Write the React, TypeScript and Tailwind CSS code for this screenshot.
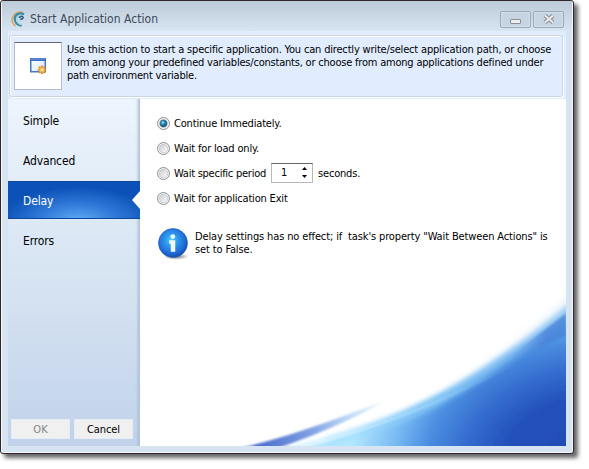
import { useState } from "react";

const TABS = ["Simple", "Advanced", "Delay", "Errors"];

function Logo() {
  return (
    <svg className="h-4 w-[15px] shrink-0" viewBox="0 0 15 16" fill="none">
      <path d="M12 1.200C7 .3 2.800 2.400 1.400 6.400c-.8 3.500.4 6.800 3.200 8.600" stroke="#e3a266" strokeWidth="1.600" />
      <path d="M13 3.400C9 1.400 4.600 2.800 3.700 7.400c-.2 4 2.800 6.900 7 7.200" stroke="#3a8da6" strokeWidth="2.400" />
      <path d="M12 4.800C8.500 3.600 6 5.500 6 8.200c0 2.800 2 4.600 4.600 5.400" stroke="#a9d8e2" strokeWidth="1.600" />
      <path d="M8 6.800c2-2.200 4.500-1.400 4 .2-.4 1-1.600 1.300-2.700 1.300" stroke="#2f6484" strokeWidth="1.700" />
    </svg>
  );
}

function WindowIcon() {
  return (
    <svg className="h-4 w-[17px]" viewBox="0 0 17 16">
      <defs>
        <linearGradient id="win" x2="1" y2="1">
          <stop stopColor="#fff" />
          <stop offset="1" stopColor="#d5e4f8" />
        </linearGradient>
      </defs>
      <rect x=".75" y=".75" width="14.500" height="13" fill="url(#win)" stroke="#4778c8" strokeWidth="1.500" />
      <path d="M0 1.500h16" stroke="#3c6dc4" strokeWidth="3" />
      <path d="M1 1h14" stroke="#6f9be2" />
      <path d="M12 7.500v8.500M7.800 11.700h8.400M9 8.700l6 6M15 8.700l-6 6" stroke="#d98d35" strokeWidth="2" />
      <circle cx="12" cy="11.700" r="2.800" fill="#f4b74b" />
      <circle cx="12" cy="11.700" r="1.300" fill="#fff0a4" />
    </svg>
  );
}

function InfoIcon() {
  return (
    <svg className="h-8 w-8 shrink-0" viewBox="0 0 32 32">
      <defs>
        <radialGradient id="orb" cx=".45" cy=".4" r=".62">
          <stop stopColor="#50d0f8" />
          <stop offset=".35" stopColor="#2f98ec" />
          <stop offset=".75" stopColor="#1f6bd6" />
          <stop offset="1" stopColor="#1648ac" />
        </radialGradient>
        <radialGradient id="orbShadow">
          <stop stopColor="#555" stopOpacity=".9" />
          <stop offset="1" stopColor="#777" stopOpacity="0" />
        </radialGradient>
      </defs>
      <ellipse cx="18" cy="28.500" rx="13" ry="3.500" fill="url(#orbShadow)" />
      <circle cx="15" cy="15" r="14.500" fill="url(#orb)" stroke="#1d55b5" strokeWidth=".6" />
      <circle cx="14.800" cy="8.600" r="2.400" fill="#e9fbff" />
      <path d="M11.500 12.500H17V23.500H13V15.500h-1.500Z" fill="#f2f9ff" stroke="#f2f9ff" strokeWidth=".5" />
    </svg>
  );
}

function Radio({ checked, onSelect }: { checked: boolean; onSelect: () => void }) {
  return (
    <button type="button" role="radio" aria-checked={checked} onClick={onSelect} className="h-[13px] w-[13px] shrink-0">
      <svg className="block h-[13px] w-[13px]" viewBox="0 0 13 13">
        <defs>
          <linearGradient id="radioWell" x2="1" y2="1">
            <stop stopColor="#c8cdd2" />
            <stop offset="1" stopColor="#fcfcfc" />
          </linearGradient>
          <radialGradient id="radioDot" cx=".4" cy=".35">
            <stop stopColor="#a4e9fb" />
            <stop offset=".45" stopColor="#36a1cc" />
            <stop offset="1" stopColor="#1b5a84" />
          </radialGradient>
        </defs>
        <circle cx="6.500" cy="6.500" r="6" fill="#f5f5f5" stroke="#8e8f8f" />
        <circle cx="6.500" cy="6.500" r="4.200" fill="url(#radioWell)" stroke="#bac0c6" strokeWidth=".7" />
        {checked && <circle cx="6.500" cy="6.500" r="3.400" fill="url(#radioDot)" stroke="#1c506f" strokeWidth=".5" />}
      </svg>
    </button>
  );
}

function Swoosh() {
  return (
    <svg className="absolute inset-0 h-full w-full" viewBox="140 99 426 347" preserveAspectRatio="none">
      <defs>
        <radialGradient id="sea" gradientUnits="userSpaceOnUse" cx="0" cy="0" r="1" gradientTransform="translate(600 470) scale(250 185)">
          <stop stopColor="#214cb4" />
          <stop offset=".4" stopColor="#2350ba" />
          <stop offset=".55" stopColor="#346bce" />
          <stop offset=".7" stopColor="#4a8de0" />
          <stop offset=".84" stopColor="#7abcf3" />
          <stop offset="1" stopColor="#b4e7ff" />
        </radialGradient>
        <linearGradient id="streak" gradientUnits="userSpaceOnUse" x1="250" y1="446" x2="395" y2="397">
          <stop stopColor="#4568cc" />
          <stop offset=".4" stopColor="#7c9ee2" />
          <stop offset=".8" stopColor="#c5e3f8" stopOpacity=".7" />
          <stop offset="1" stopColor="#fff" stopOpacity="0" />
        </linearGradient>
        <linearGradient id="ridge" gradientUnits="userSpaceOnUse" x1="305" y1="446" x2="525" y2="360">
          <stop stopColor="#fff" />
          <stop offset=".5" stopColor="#c0e7ff" stopOpacity=".7" />
          <stop offset="1" stopColor="#78b6f2" stopOpacity="0" />
        </linearGradient>
        <linearGradient id="crest" gradientUnits="userSpaceOnUse" x1="330" y1="440" x2="566" y2="310">
          <stop stopColor="#9cddff" stopOpacity=".3" />
          <stop offset=".4" stopColor="#86cbf8" stopOpacity=".8" />
          <stop offset=".75" stopColor="#7bbcf2" stopOpacity=".7" />
          <stop offset="1" stopColor="#8fc3f2" stopOpacity=".7" />
        </linearGradient>
        <linearGradient id="veil" gradientUnits="userSpaceOnUse" x1="505" y1="0" x2="545" y2="0">
          <stop stopColor="#5a9ae4" stopOpacity="0" />
          <stop offset="1" stopColor="#4a84d8" />
        </linearGradient>
        <filter id="soft" x="-20%" y="-30%" width="140%" height="160%">
          <feGaussianBlur stdDeviation="7" />
        </filter>
        <filter id="fine" x="-20%" y="-30%" width="140%" height="160%">
          <feGaussianBlur stdDeviation="2.6" />
        </filter>
        <filter id="thin" x="-20%" y="-30%" width="140%" height="160%">
          <feGaussianBlur stdDeviation=".8" />
        </filter>
      </defs>
      <path d="M340 450C430 421 488 381 590 288V460H340Z" fill="#86bff3" filter="url(#soft)" opacity=".9" />
      <path d="M285 449C405 421 467 386 535 338L580 306V460H285Z" fill="url(#sea)" filter="url(#fine)" />
      <path d="M325 442C410 421 462 390 535 338L585 300" fill="none" stroke="url(#crest)" strokeWidth="11" filter="url(#fine)" />
      <path d="M500 364Q530 341 566 313.500V336Q530 352 500 372Z" fill="url(#veil)" filter="url(#thin)" opacity=".8" />
      <path d="M266 448C315 436 354 421 390 401" fill="none" stroke="#fff" strokeWidth="4" filter="url(#fine)" />
      <path d="M240 448C290 437 345 416 398 395C348 422 308 438 278 448Z" fill="url(#streak)" filter="url(#thin)" />
      <path d="M300 447C380 429 445 400 525 359" fill="none" stroke="url(#ridge)" strokeWidth="1.500" filter="url(#thin)" />
    </svg>
  );
}

export default function App() {
  const [tab, setTab] = useState("Delay");
  const [mode, setMode] = useState(0);
  const [seconds, setSeconds] = useState(1);

  return (
    <div className="h-[469px] w-[589px] overflow-hidden bg-white font-['DejaVu_Sans_Condensed','DejaVu_Sans',sans-serif] text-[11px] leading-[13px] text-black [font-stretch:condensed]">
      <div className="flex h-[454px] w-[574px] flex-col rounded-[3px] border border-[#30282d] bg-[#d7e4f2] px-[7px] pb-[7px] [box-shadow:inset_0_0_0_1px_#f3f7fb,4px_4px_4px_0px_#666]">
        <header className="-mx-[6px] flex h-[30px] shrink-0 items-center bg-linear-to-b from-[#bdcbd9] to-[#d7e4f1] pl-[9px] pt-[6px]">
          <Logo />
          <h1 className="ml-1 whitespace-nowrap text-[12px] leading-4 tracking-[0.03px] text-[#3e4a58]">Start Application Action</h1>
          <div className="ml-auto mr-[8px] flex gap-[2px]">
            <button className="flex h-[17px] w-[31px] items-center justify-center rounded-[2px] border border-[#9ba7b5] bg-[#c7d4e1] shadow-[inset_0_0_0_1px_#d3dfea]" aria-label="Minimize">
              <span className="mt-1 h-[5px] w-[11px] rounded-[1px] border border-[#8a8f99] bg-[#eee]" />
            </button>
            <button className="flex h-[17px] w-[31px] items-center justify-center rounded-[2px] border border-[#9ba7b5] bg-[#c7d4e1] shadow-[inset_0_0_0_1px_#d3dfea]" aria-label="Close">
              <svg className="h-[10px] w-3" viewBox="0 0 12 10">
                <path d="M2 1.500l8 7M10 1.500l-8 7" stroke="#858b96" strokeWidth="4" />
                <path d="M2 1.500l8 7M10 1.500l-8 7" stroke="#ededed" strokeWidth="2" />
              </svg>
            </button>
          </div>
        </header>

        <section className="h-[68px] shrink-0 bg-[#e1edff] px-px pb-[2px] pt-[4px]">
          <div className="flex h-[62px] w-[554px] rounded-[3px] border border-[#cad6e4] pl-1 pt-[6px] shadow-[inset_0_1px_#fff,inset_1px_0_#fff,1px_1px_#fff]">
            <div className="flex h-12 w-12 shrink-0 items-center justify-center border border-[#b9bcc3] border-t-[#65676c] bg-white">
              <WindowIcon />
            </div>
            <div className="ml-[5px] whitespace-nowrap pt-px">
              <p className="tracking-[-0.178px]">Use this action to start a specific application. You can directly write/select application path, or choose</p>
              <p className="tracking-[-0.205px]">from among your predefined variables/constants, or choose from among applications defined under</p>
              <p className="tracking-[-0.188px]">path environment variable.</p>
            </div>
          </div>
        </section>

        <div className="flex min-h-0 flex-1">
          <aside className="flex w-[132px] shrink-0 flex-col border-r border-[#b5c5d9] bg-linear-to-b from-[#edf5fd] via-[#d7e4f2] via-50% to-[#c1d2ea] shadow-[inset_-3px_0_3px_-2px_#a8bad2]">
            <nav className="flex flex-col pt-0.5 text-[12px] tracking-[-0.15px]">
              {TABS.map((name) => (
                <button
                  key={name}
                  onClick={() => setTab(name)}
                  className={
                    tab === name
                      ? "relative -mr-px mb-[2px] flex h-[38px] items-center bg-[radial-gradient(ellipse_58%_90%_at_53%_105%,#60adf5_0%,#327bd9_48%,#0b51b7_100%)] pl-[15px] pt-0.5 text-white shadow-[inset_0_1px_#0b49a2,inset_0_-1px_#0d47a0]"
                      : "flex h-10 items-center pl-[15px]"
                  }
                >
                  {name}
                  {tab === name && (
                    <svg className="absolute right-0 top-2.5 h-[18px] w-2" viewBox="0 0 8 20" preserveAspectRatio="none">
                      <path d="M8 0v20L0 10Z" fill="#fff" />
                    </svg>
                  )}
                </button>
              ))}
            </nav>
            <div className="mb-[7px] mt-auto flex gap-1 pl-[3px]">
              <button disabled className="h-5 w-[59px] border border-[#e4edf7] bg-[#f0f0f0] text-[#858585]">OK</button>
              <button className="h-5 w-[59px] border border-[#e4edf7] bg-[#f0f0f0] tracking-[-0.1px]">Cancel</button>
            </div>
          </aside>

          <main className="relative min-w-0 flex-1 overflow-hidden bg-white">
            <Swoosh />
            <div className="relative pl-[17px] pt-3">
              <div role="radiogroup" className="flex flex-col whitespace-nowrap tracking-[-0.18px]">
                <div className="flex h-[25px] items-center gap-1">
                  <Radio checked={mode === 0} onSelect={() => setMode(0)} />
                  <span>Continue Immediately.</span>
                </div>
                <div className="flex h-[25px] items-center gap-1">
                  <Radio checked={mode === 1} onSelect={() => setMode(1)} />
                  <span>Wait for load only.</span>
                </div>
                <div className="flex h-[25px] items-center gap-1">
                  <Radio checked={mode === 2} onSelect={() => setMode(2)} />
                  <span className="w-[93px] tracking-[-0.25px]">Wait specific period</span>
                  <div className="mb-[2px] flex h-5 w-[42px] items-center border border-[#b8b8b8] border-t-[#666] bg-white pl-[9px]">
                    <span className="w-[21px]">{seconds}</span>
                    <div className="flex flex-col gap-[5px]">
                      <button aria-label="Increase" onClick={() => setSeconds(seconds + 1)}>
                        <svg className="block h-[3px] w-[5px]" viewBox="0 0 5 3"><path d="M2.500 0 5 3H0Z" /></svg>
                      </button>
                      <button aria-label="Decrease" onClick={() => setSeconds(Math.max(0, seconds - 1))}>
                        <svg className="block h-[3px] w-[5px]" viewBox="0 0 5 3"><path d="M0 0h5L2.500 3Z" /></svg>
                      </button>
                    </div>
                  </div>
                  <span className="ml-[1px]">seconds.</span>
                </div>
                <div className="flex h-[25px] items-center gap-1">
                  <Radio checked={mode === 3} onSelect={() => setMode(3)} />
                  <span>Wait for application Exit</span>
                </div>
              </div>
              <div className="mt-[17px] flex pl-px">
                <InfoIcon />
                <div className="ml-[5px] mt-0.5 whitespace-pre tracking-[-0.135px]">
                  <p>{'Delay settings has no effect; if  task\'s property "Wait Between Actions" is'}</p>
                  <p>set to False.</p>
                </div>
              </div>
            </div>
          </main>
        </div>
      </div>
    </div>
  );
}
